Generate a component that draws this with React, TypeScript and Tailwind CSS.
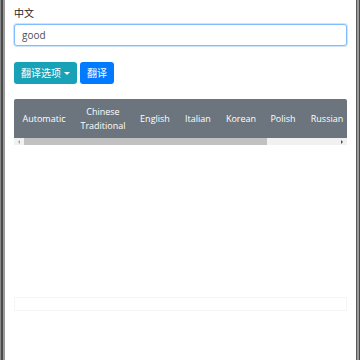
import React from 'react';

const columns = [
  { name: 'Automatic', w: 'w-[60px]' },
  { name: 'Chinese Traditional', w: 'w-[58px]' },
  { name: 'English', w: 'w-[46px]' },
  { name: 'Italian', w: 'w-[40px]' },
  { name: 'Korean', w: 'w-[46px]' },
  { name: 'Polish', w: 'w-[38px]' },
  { name: 'Russian', w: 'w-[50px]' },
];

const App = () => {
  return (
    <div className="flex h-[360px] w-[360px] bg-white" style={{ fontFamily: '"Open Sans", "Noto Sans CJK SC", sans-serif' }}>
      {/* window edge left */}
      <div className="flex h-full w-[5px] shrink-0">
        <div className="w-px bg-[#8a8a8a]" />
        <div className="w-[2px] bg-[#4a4a4a]" />
        <div className="w-[2px] bg-[#9a9a9a]" />
      </div>

      <div className="flex flex-1 flex-col px-[9px] pt-[6px]">
        <label className="text-[10px] leading-[14px] text-[#212529]">中文</label>

        <div className="mt-[4px] flex h-[22px] items-center rounded-[3px] border border-[#80bdff] bg-white px-[7px] shadow-[0_0_0_1px_rgba(0,123,255,0.2)]">
          <span className="text-[10px] text-[#495057]">good</span>
        </div>

        <div className="mt-[16px] flex gap-[3px]">
          <button className="flex h-[22px] items-center gap-[3px] rounded-[3px] bg-[#17a2b8] px-[7px] text-[10px] text-white">
            翻译选项
            <span className="h-0 w-0 border-x-[3px] border-t-[3px] border-x-transparent border-t-white" />
          </button>
          <button className="h-[22px] rounded-[3px] bg-[#007bff] px-[7px] text-[10px] text-white">翻译</button>
        </div>

        <div className="mt-[15px] w-[333px] overflow-hidden">
          <div className="flex h-[39px] items-center rounded-t-[2px] bg-[#6c757d] text-[9px] leading-[14px] text-white">
            {columns.map((c) => (
              <div key={c.name} className={`${c.w} shrink-0 text-center`}>
                {c.name}
              </div>
            ))}
          </div>
          {/* scrollbar */}
          <div className="flex h-[7px] items-center bg-[#f1f1f1]">
            <div className="flex w-[10px] justify-center">
              <span className="h-0 w-0 border-y-[2px] border-r-[2px] border-y-transparent border-r-[#a3a3a3]" />
            </div>
            <div className="h-full w-[243px] bg-[#c1c1c1]" />
            <div className="flex-1" />
            <div className="flex w-[10px] justify-center">
              <span className="h-0 w-0 border-y-[2px] border-l-[2px] border-y-transparent border-l-[#505050]" />
            </div>
          </div>
        </div>

        <div className="mt-[152px] h-[14px] w-[333px] border border-[#f3f5f7]" />
      </div>

      {/* window edge right */}
      <div className="flex h-full w-[5px] shrink-0">
        <div className="w-px bg-[#5a5a5a]" />
        <div className="w-[2px] bg-[#9a9a9a]" />
        <div className="w-[2px] bg-[#4a4a4a]" />
      </div>
    </div>
  );
};

export default App;
